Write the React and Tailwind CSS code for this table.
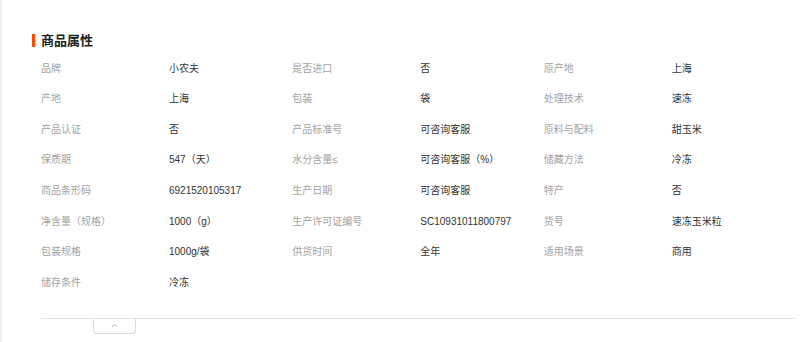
import { ChevronUp } from "lucide-react";

const rows = [
  ["品牌", "小农夫", "是否进口", "否", "原产地", "上海"],
  ["产地", "上海", "包装", "袋", "处理技术", "速冻"],
  ["产品认证", "否", "产品标准号", "可咨询客服", "原料与配料", "甜玉米"],
  ["保质期", "547（天）", "水分含量≤", "可咨询客服（%）", "储藏方法", "冷冻"],
  ["商品条形码", "6921520105317", "生产日期", "可咨询客服", "特产", "否"],
  ["净含量（规格）", "1000（g）", "生产许可证编号", "SC10931011800797", "货号", "速冻玉米粒"],
  ["包装规格", "1000g/袋", "供货时间", "全年", "适用场景", "商用"],
  ["储存条件", "冷冻"],
];

export default function App() {
  const cells = rows.flatMap((r) => {
    const out = [];
    for (let i = 0; i < r.length; i += 2) out.push([r[i], r[i + 1]]);
    return out;
  });

  return (
    <div
      className="flex min-h-[342px] bg-white"
      style={{ fontFamily: '"Liberation Sans", "Noto Sans CJK SC", sans-serif' }}
    >
      <div className="w-[2px] shrink-0 bg-[#efefef]" />
      <div className="flex-1 pl-[30px] pt-[33px]">
        {/* Section title */}
        <div className="flex h-[14px] items-center">
          <div className="h-[13px] w-[3px] bg-[#ff4a00]" />
          <h2 className="ml-[6px] text-[13px] font-bold leading-none text-[#222]">商品属性</h2>
        </div>

        <div className="ml-[9px] w-[754px]">
          <div className="mt-[6.5px] grid grid-cols-3">
            {cells.map(([label, value], i) => (
              <div key={i} className="flex h-[30.57px] items-center text-[10px] leading-none">
                <span className="w-[128px] shrink-0 text-[#a3a3a3]">{label}</span>
                <span className="text-[#333]">{value}</span>
              </div>
            ))}
          </div>

          <div className="mt-[19.5px] border-t border-[#e3e3e3]" />
          <div className="ml-[52px] flex h-[15px] w-[43px] items-start justify-center rounded-b-[4px] border border-t-0 border-[#dcdcdc] pt-[2px]">
            <ChevronUp size={9} strokeWidth={2} className="text-[#999]" />
          </div>
        </div>
      </div>
    </div>
  );
}
